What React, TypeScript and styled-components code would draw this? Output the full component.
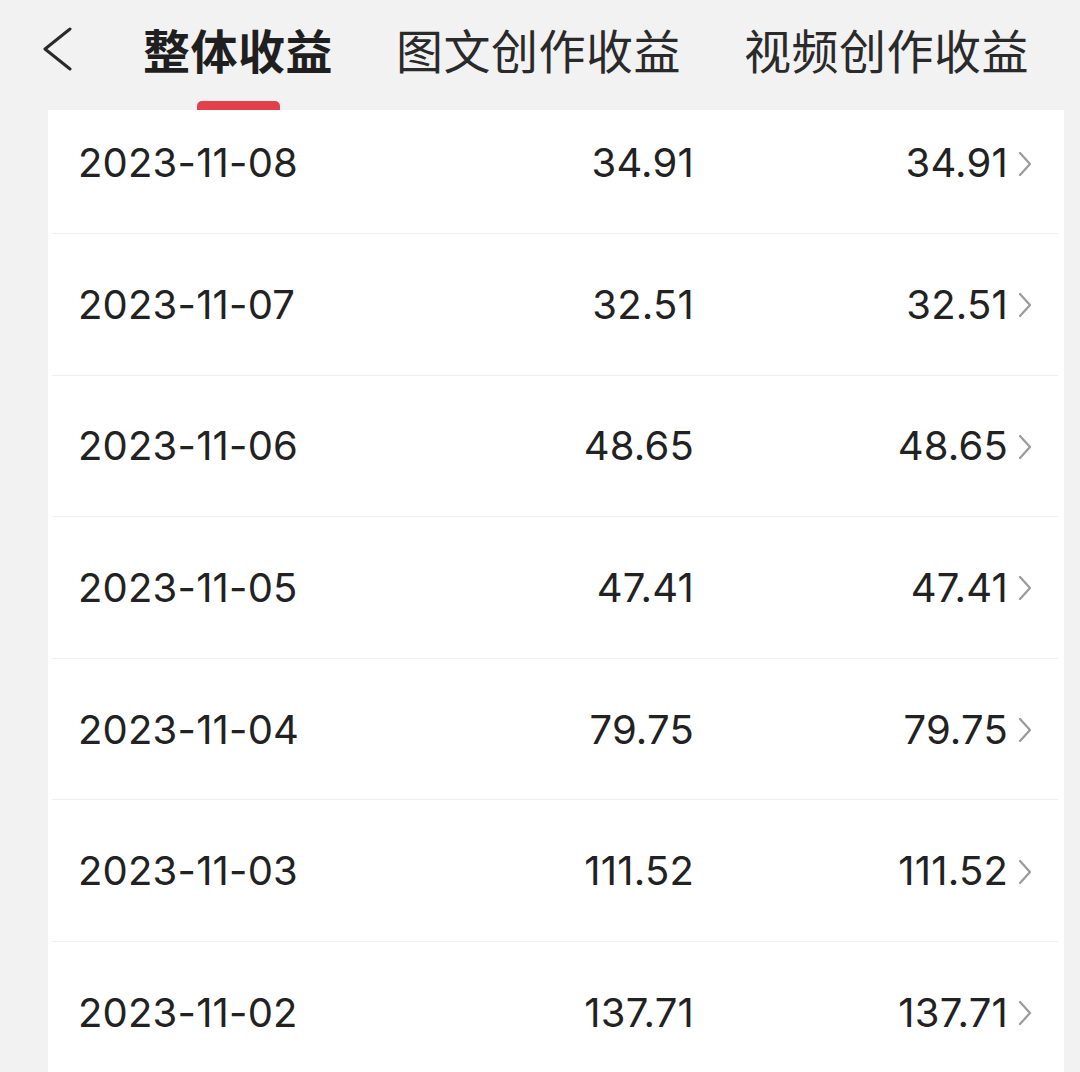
import React from "react";
import styled, { createGlobalStyle } from "styled-components";

const rows = [
  { date: "2023-11-08", total: "34.91", right: "34.91" },
  { date: "2023-11-07", total: "32.51", right: "32.51" },
  { date: "2023-11-06", total: "48.65", right: "48.65" },
  { date: "2023-11-05", total: "47.41", right: "47.41" },
  { date: "2023-11-04", total: "79.75", right: "79.75" },
  { date: "2023-11-03", total: "111.52", right: "111.52" },
  { date: "2023-11-02", total: "137.71", right: "137.71" },
];

const tabs = ["整体收益", "图文创作收益", "视频创作收益"];

const GlobalStyle = createGlobalStyle`
  html, body {
    margin: 0;
    padding: 0;
    background: #f2f2f2;
    font-family: Inter, "Noto Sans CJK SC", sans-serif;
    overflow: hidden;
  }
`;

const Page = styled.div`
  width: 1080px;
  height: 1072px;
  background: #f2f2f2;
  overflow: hidden;
`;

const Header = styled.header`
  height: 110px;
  display: flex;
  align-items: flex-start;
  padding-left: 42px;
  box-sizing: border-box;
`;

const BackButton = styled.div`
  width: 30px;
  height: 98px;
  display: flex;
  align-items: center;
  margin-right: 71px;
`;

const Tabs = styled.nav`
  display: flex;
  gap: 63px;
`;

const Tab = styled.div<{ $active?: boolean }>`
  height: 110px;
  display: flex;
  flex-direction: column;
  align-items: center;
  font-family: "Noto Sans CJK SC", sans-serif;
  font-size: 47px;
  line-height: 98px;
  font-weight: ${(p) => (p.$active ? 700 : 400)};
  color: ${(p) => (p.$active ? "#1f1f1f" : "#2a2a2a")};
  letter-spacing: 0.5px;
`;

const Underline = styled.div`
  width: 83px;
  height: 9px;
  margin-top: 3px;
  background: #e2404a;
  border-radius: 5px 5px 0 0;
`;

const Card = styled.section`
  margin-left: 48px;
  width: 1016px;
  background: #ffffff;
`;

const Row = styled.div<{ $first?: boolean }>`
  margin: 0 6px 0 4px;
  padding-left: 26px;
  height: ${(p) => (p.$first ? "124px" : "141.6px")};
  padding-bottom: ${(p) => (p.$first ? "18px" : "0")};
  box-sizing: border-box;
  border-bottom: 1px solid #efefef;
  display: grid;
  grid-template-columns: 416px 200px 314px 50px;
  align-items: center;
  font-size: 40px;
  color: #222222;
`;

const DateCell = styled.div`
  letter-spacing: 0.2px;
`;

const Amount = styled.div`
  text-align: right;
  letter-spacing: 0.2px;
`;

const ChevronCell = styled.div`
  display: flex;
  align-items: center;
  padding-left: 10px;
  padding-top: 2px;
`;

const BackIcon = () => (
  <svg width="30" height="44" viewBox="0 0 30 44">
    <path d="M28 2 L3 22 L28 42" fill="none" stroke="#2a2a2a" strokeWidth="3" strokeLinecap="round" strokeLinejoin="round" />
  </svg>
);

const Chevron = () => (
  <svg width="14" height="26" viewBox="0 0 14 26">
    <path d="M2 2 L12 13 L2 24" fill="none" stroke="#9a9a9a" strokeWidth="2.2" strokeLinecap="round" strokeLinejoin="round" />
  </svg>
);

export default function App() {
  return (
    <Page>
      <GlobalStyle />
      <Header>
        <BackButton>
          <BackIcon />
        </BackButton>
        <Tabs>
          {tabs.map((t, i) => (
            <Tab key={t} $active={i === 0}>
              {t}
              {i === 0 && <Underline />}
            </Tab>
          ))}
        </Tabs>
      </Header>
      <Card>
        {rows.map((r, i) => (
          <Row key={r.date} $first={i === 0}>
            <DateCell>{r.date}</DateCell>
            <Amount>{r.total}</Amount>
            <Amount>{r.right}</Amount>
            <ChevronCell>
              <Chevron />
            </ChevronCell>
          </Row>
        ))}
      </Card>
    </Page>
  );
}
